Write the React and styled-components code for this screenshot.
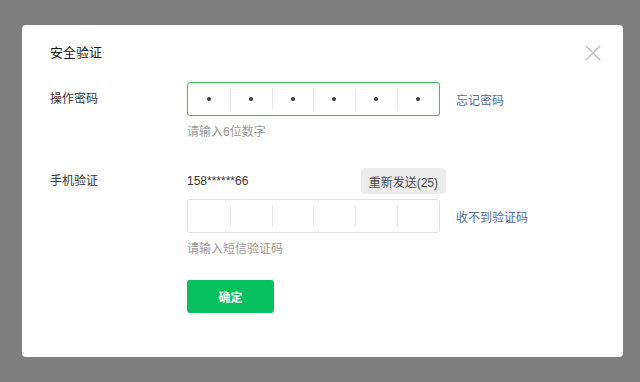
import styled, { createGlobalStyle } from "styled-components";

const GlobalStyle = createGlobalStyle`
  html, body {
    margin: 0;
    padding: 0;
    background: #7f7f7f;
    font-family: "Liberation Sans", "Noto Sans CJK SC", sans-serif;
  }
`;

const Overlay = styled.div`
  width: 640px;
  height: 382px;
  padding: 25px 0 0 22px;
  box-sizing: border-box;
`;

const Dialog = styled.div`
  position: relative;
  width: 601px;
  height: 332px;
  box-sizing: border-box;
  padding: 19px 28px 0;
  background: #fff;
  border-radius: 4px;
`;

const Title = styled.h2`
  margin: 0;
  font-size: 13px;
  font-weight: normal;
  line-height: 18px;
  color: #191919;
`;

const CloseButton = styled.button`
  position: absolute;
  top: 20px;
  right: 22px;
  width: 16px;
  height: 16px;
  padding: 0;
  border: none;
  background: none;
  cursor: pointer;
`;

const Form = styled.div`
  margin-top: 20px;
  display: grid;
  grid-template-columns: 137px 1fr;
  row-gap: 28px;
`;

const Label = styled.div`
  font-size: 12px;
  color: #353535;
  line-height: ${(p) => p.$lh}px;
`;

const Field = styled.div`
  display: flex;
  flex-direction: column;
`;

const CodeRow = styled.div`
  display: flex;
  align-items: center;
  margin-top: ${(p) => p.$top || 0}px;
`;

const CodeBox = styled.div`
  display: flex;
  width: 253px;
  height: 34px;
  box-sizing: border-box;
  border: 1px solid ${(p) => (p.$active ? "#3ebd5a" : "#e2e2e2")};
  border-radius: 3px;
`;

const Cell = styled.div`
  flex: 1;
  display: flex;
  align-items: center;
  justify-content: center;
  position: relative;

  & + &::before {
    content: "";
    position: absolute;
    left: 0;
    top: 5px;
    bottom: 5px;
    width: 1px;
    background: #ececec;
  }
`;

const Dot = styled.span`
  width: 4px;
  height: 4px;
  border-radius: 50%;
  background: #3a3a3a;
`;

const Link = styled.a`
  margin-left: 16px;
  font-size: 12px;
  color: #576b95;
  text-decoration: none;
  cursor: pointer;
`;

const Hint = styled.div`
  margin-top: 8px;
  font-size: 12px;
  line-height: 16px;
  color: #9a9a9a;
`;

const PhoneLine = styled.div`
  width: 259px;
  height: 26px;
  display: flex;
  align-items: center;
  justify-content: space-between;
`;

const Phone = styled.span`
  font-size: 12px;
  color: #353535;
`;

const ResendButton = styled.button`
  height: 26px;
  padding: 0 8px;
  border: none;
  border-radius: 4px;
  background: #ececec;
  color: #4a4a4a;
  font-family: inherit;
  font-size: 12px;
`;

const Confirm = styled.button`
  margin-top: 23px;
  width: 87px;
  height: 33px;
  border: none;
  border-radius: 3px;
  background: #07c160;
  color: #fff;
  font-family: inherit;
  font-size: 12px;
  font-weight: bold;
  cursor: pointer;
`;

function Code({ filled, active }) {
  return (
    <CodeBox $active={active}>
      {Array.from({ length: 6 }).map((_, i) => (
        <Cell key={i}>{filled && <Dot />}</Cell>
      ))}
    </CodeBox>
  );
}

export default function App() {
  return (
    <>
      <GlobalStyle />
      <Overlay>
        <Dialog>
          <Title>安全验证</Title>
          <CloseButton aria-label="关闭">
            <svg width="16" height="16" viewBox="0 0 16 16">
              <path d="M1 1 L15 15 M15 1 L1 15" stroke="#bdbdbd" strokeWidth="1.4" />
            </svg>
          </CloseButton>
          <Form>
            <Label $lh={34}>操作密码</Label>
            <Field>
              <CodeRow>
                <Code filled active />
                <Link>忘记密码</Link>
              </CodeRow>
              <Hint>请输入6位数字</Hint>
            </Field>

            <Label $lh={26}>手机验证</Label>
            <Field>
              <PhoneLine>
                <Phone>158******66</Phone>
                <ResendButton>重新发送(25)</ResendButton>
              </PhoneLine>
              <CodeRow $top={5}>
                <Code />
                <Link>收不到验证码</Link>
              </CodeRow>
              <Hint>请输入短信验证码</Hint>
              <Confirm>确定</Confirm>
            </Field>
          </Form>
        </Dialog>
      </Overlay>
    </>
  );
}
